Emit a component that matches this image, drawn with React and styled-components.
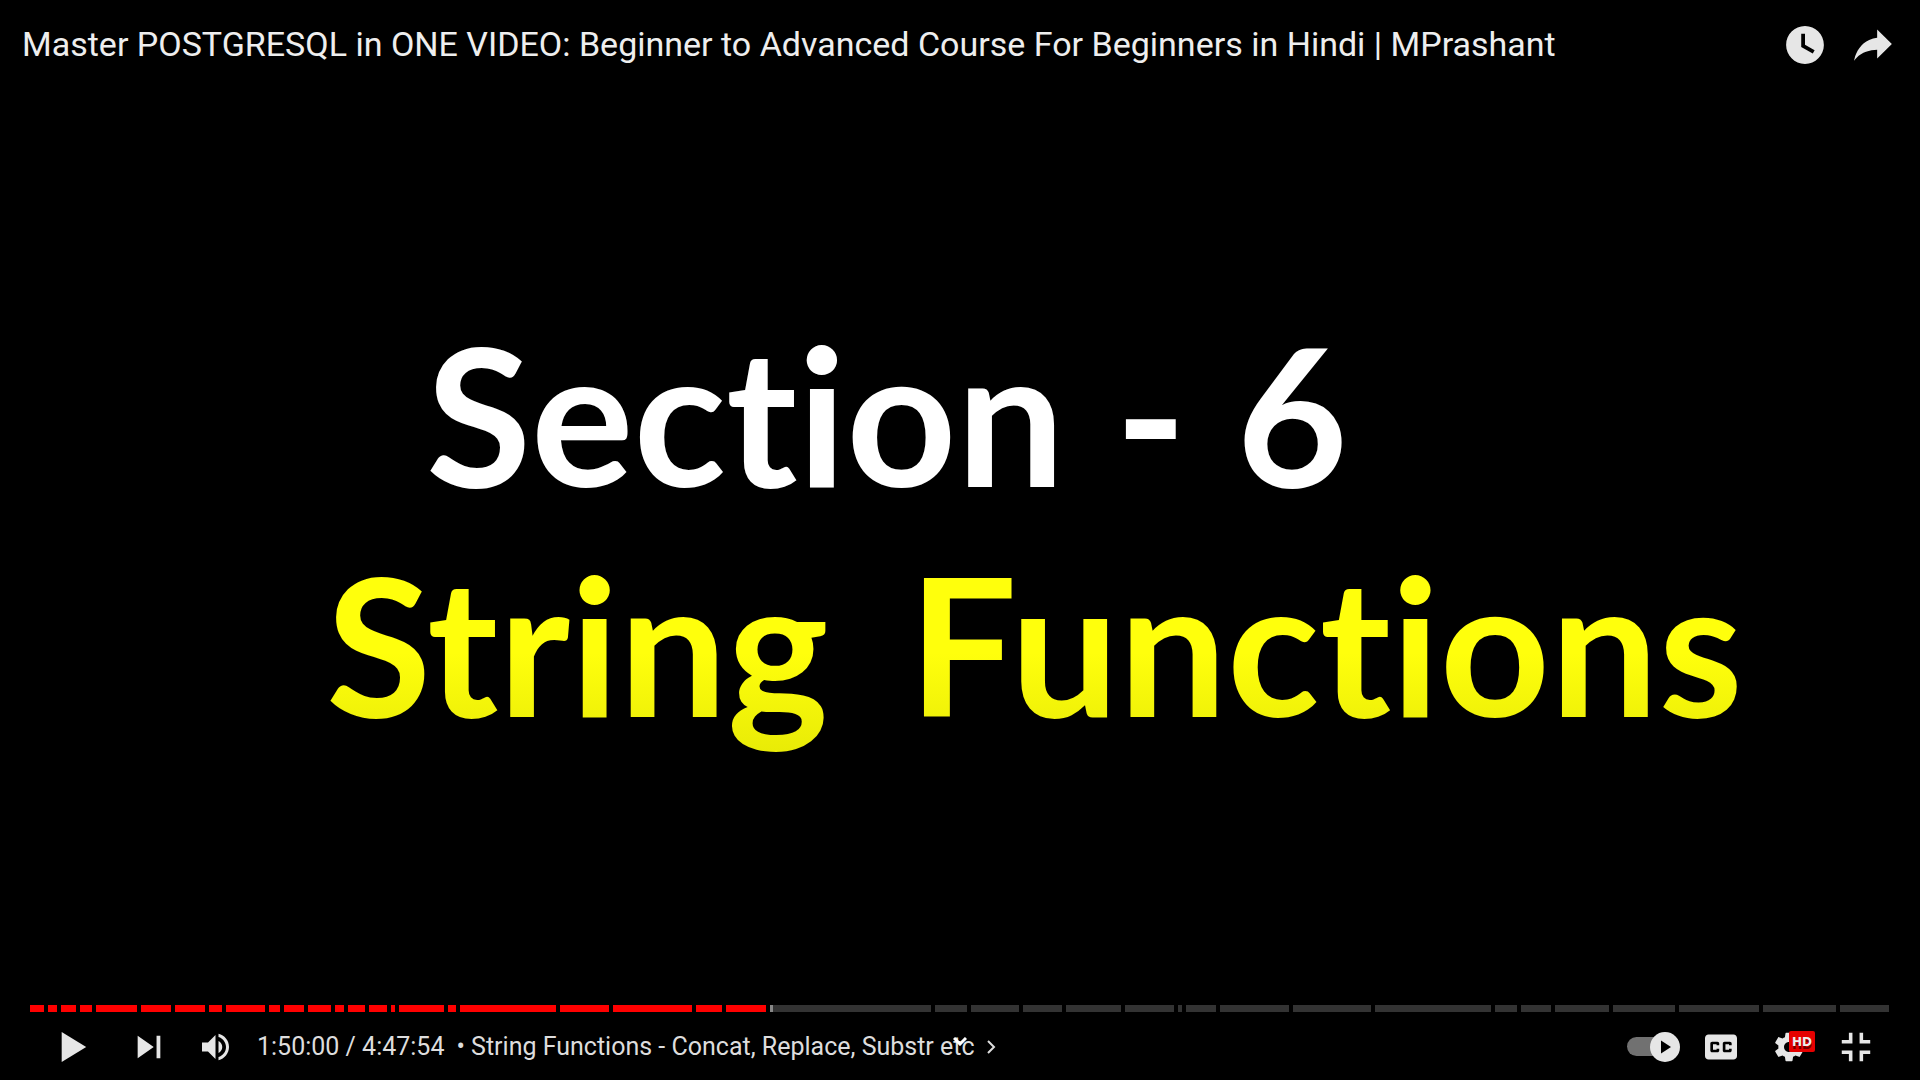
import React, { useState } from "react";
import styled, { createGlobalStyle } from "styled-components";

const GlobalStyle = createGlobalStyle`
  * { box-sizing: border-box; }
  body { margin: 0; background: #000; }
`;

const Player = styled.div`
  display: flex;
  flex-direction: column;
  min-height: 100vh;
  overflow: hidden;
  background: #000;
  color: #e6e6e6;
  font-family: Roboto, "Liberation Sans", sans-serif;
`;

const TopBar = styled.header`
  display: flex;
  align-items: center;
  justify-content: space-between;
  height: 90px;
  padding: 0 13px 0 22px;
`;

const VideoTitle = styled.a`
  padding-bottom: 2px;
  color: #eee;
  font-size: 34px;
  line-height: 40px;
  text-decoration: none;
  white-space: nowrap;
`;

const Group = styled.div`
  display: flex;
  align-items: center;
`;

const IconButton = styled.button`
  display: flex;
  align-items: center;
  justify-content: center;
  flex: none;
  width: ${(p) => p.$width || 68}px;
  height: 68px;
  padding: 0;
  border: 0;
  background: none;
  color: inherit;
  cursor: pointer;
`;

const PlayButton = styled(IconButton)`
  margin-right: 8px;
`;

const Glyph = styled.svg`
  display: block;
  flex: none;
  width: ${(p) => p.$size || 68}px;
  height: ${(p) => p.$size || 68}px;
  fill: #e6e6e6;
`;

const Slide = styled.main`
  flex: 1;
  display: flex;
  flex-direction: column;
  justify-content: center;
  padding-bottom: 20px;
  font-family: Lato, "Open Sans", sans-serif;
`;

const SlideLine = styled.h1`
  display: flex;
  gap: ${(p) => p.$gap}px;
  margin: 0;
  padding-left: ${(p) => p.$indent}px;
  color: #fff;
  font-size: 192px;
  font-weight: 700;
  font-variant-ligatures: none;
  line-height: 230px;
  white-space: nowrap;
`;

const YellowLine = styled(SlideLine).attrs({ as: "h2" })`
  padding-bottom: 20px;
  background: linear-gradient(#ffff0c 50%, #e3e605 100%);
  background-clip: text;
  -webkit-background-clip: text;
  color: transparent;
`;

const Timeline = styled.div`
  position: relative;
  display: flex;
  gap: 4px;
  height: 7px;
  margin: 0 31px 0 30px;
`;

const Seek = styled.input`
  position: absolute;
  inset: 0;
  width: 100%;
  height: 100%;
  margin: 0;
  opacity: 0;
  cursor: pointer;
`;

const Chapter = styled.div`
  flex: ${(p) => p.$span} 1 0;
  background: ${(p) =>
    p.$played ? "#f00" : p.$current ? "linear-gradient(90deg, #888 3px, #333 3px)" : "#333"};
`;

const Controls = styled.footer`
  position: relative;
  display: flex;
  align-items: center;
  justify-content: space-between;
  height: 68px;
  padding: 2px 31px 0 39px;
`;

const Status = styled.div`
  display: flex;
  align-items: center;
  gap: 12px;
  padding-left: 6px;
  color: #ddd;
  font-size: 25px;
  line-height: 30px;
  white-space: nowrap;
`;

const ChapterButton = styled.button`
  display: flex;
  align-items: center;
  gap: 12px;
  padding: 0;
  border: 0;
  background: none;
  color: inherit;
  font: inherit;
  cursor: pointer;
`;

const MoreArrow = styled.button`
  position: absolute;
  left: 50%;
  top: 25px;
  display: flex;
  padding: 0;
  border: 0;
  background: none;
  transform: translateX(-50%);
  cursor: pointer;
`;

const SettingsButton = styled(IconButton)`
  position: relative;
`;

const Badge = styled.span`
  position: absolute;
  left: 34px;
  top: 18px;
  width: 26px;
  height: 21px;
  border-radius: 2px;
  background: #e60000;
  color: #eee;
  font: 700 12px/23px "DejaVu Sans", sans-serif;
  text-align: center;
  text-shadow: 0 3px 0 #700000;
`;

const starts = [
  30, 48, 61, 80, 96, 141, 175, 209, 226, 269, 284, 308, 335, 348, 369, 391,
  399, 448, 460, 560, 613, 696, 726, 770, 935, 971, 1023, 1066, 1125, 1178,
  1186, 1220, 1293, 1375, 1495, 1521, 1555, 1613, 1679, 1763, 1840, 1893,
];
const chapters = starts.slice(0, -1).map((s, i) => starts[i + 1] - s - 4);
const current = 23;

export default function App() {
  const [time, setTime] = useState(6600);
  return (
    <>
      <GlobalStyle />
      <Player>
        <TopBar>
          <VideoTitle href="#">
            Master POSTGRESQL in ONE VIDEO: Beginner to Advanced Course For Beginners in Hindi | MPrashant
          </VideoTitle>
          <Group>
            <IconButton aria-label="Watch later">
              <Glyph viewBox="0 0 36 36">
                <path fillRule="evenodd" d="M18,8C12.47,8 8,12.47 8,18C8,23.52 12.47,28 18,28C23.52,28 28,23.52 28,18C28,12.47 23.52,8 18,8ZM16,19.02L16,12L18,12L18,17.86L23.1,20.81L22.1,22.54Z" />
              </Glyph>
            </IconButton>
            <IconButton aria-label="Share">
              <Glyph viewBox="0 0 36 36">
                <path d="m20.2,14.19 0,-4.45 7.79,7.79 -7.79,7.56 0,-4.56C16.27,20.69 12.1,21.81 9.34,24.76 8.8,25.13 7.6,27.29 8.12,25.65 9.08,21.32 11.8,17.18 15.98,15.38c1.33,-.6 2.76,-.98 4.21,-1.19z" />
              </Glyph>
            </IconButton>
          </Group>
        </TopBar>

        <Slide>
          <SlideLine $indent={426} $gap={50}>
            <span>Section</span>
            <span>-</span>
            <span>6</span>
          </SlideLine>
          <YellowLine $indent={326} $gap={80}>
            <span>String</span>
            <span>Functions</span>
          </YellowLine>
        </Slide>

        <Timeline>
          {chapters.map((span, i) => (
            <Chapter key={i} $span={span} $played={i < current} $current={i === current} />
          ))}
          <Seek
            type="range"
            aria-label="Seek"
            min="0"
            max="17274"
            value={time}
            onChange={(e) => setTime(Number(e.target.value))}
          />
        </Timeline>

        <Controls>
          <Group>
            <PlayButton aria-label="Play">
              <Glyph viewBox="0 0 36 36">
                <path d="M12,26 25,18 12,10z" />
              </Glyph>
            </PlayButton>
            <IconButton aria-label="Next">
              <Glyph viewBox="0 0 36 36">
                <path d="M12,24 20.5,18 12,12zM22,12v12h2V12z" />
              </Glyph>
            </IconButton>
            <IconButton aria-label="Mute">
              <Glyph viewBox="0 0 36 36" $size={54}>
                <path d="M8,21L12,21L17,26L17,10L12,15L8,15ZM19,14L19,22C20.48,21.32 21.5,19.77 21.5,18C21.5,16.26 20.48,14.74 19,14ZM19,11.29C21.89,12.15 24,14.83 24,18C24,21.17 21.89,23.85 19,24.71L19,26.77C23.01,25.86 26,22.28 26,18C26,13.72 23.01,10.14 19,9.23Z" />
              </Glyph>
            </IconButton>
            <Status>
              <span>1:50:00 / 4:47:54</span>
              <ChapterButton>
                <span>• String Functions - Concat, Replace, Substr etc</span>
                <svg width="9" height="14" viewBox="0 0 9 14" fill="none" stroke="#ddd" strokeWidth="2">
                  <path d="M1,1 7,7 1,13" />
                </svg>
              </ChapterButton>
            </Status>
          </Group>
          <Group>
            <IconButton role="switch" aria-checked="true" aria-label="Autoplay">
              <svg width="54" height="30" viewBox="0 0 54 30">
                <rect x="1" y="5" width="46" height="19" rx="9.5" fill="#717171" />
                <circle cx="39" cy="15" r="15" fill="#e6e6e6" />
                <path d="M35,8.5 45,15 35,21.5z" fill="#000" />
              </svg>
            </IconButton>
            <IconButton aria-label="Subtitles">
              <Glyph viewBox="0 0 36 36" $size={64}>
                <path fillRule="evenodd" d="M11,11C9.89,11 9,11.9 9,13L9,23C9,24.1 9.89,25 11,25L25,25C26.1,25 27,24.1 27,23L27,13C27,11.9 26.1,11 25,11ZM17,17L15.5,17L15.5,16.5L13.5,16.5L13.5,19.5L15.5,19.5L15.5,19L17,19L17,20C17,20.55 16.55,21 16,21L13,21C12.45,21 12,20.55 12,20L12,16C12,15.45 12.45,15 13,15L16,15C16.55,15 17,15.45 17,16ZM24,17L22.5,17L22.5,16.5L20.5,16.5L20.5,19.5L22.5,19.5L22.5,19L24,19L24,20C24,20.55 23.55,21 23,21L20,21C19.45,21 19,20.55 19,20L19,16C19,15.45 19.45,15 20,15L23,15C23.55,15 24,15.45 24,16Z" />
              </Glyph>
            </IconButton>
            <SettingsButton aria-label="Settings">
              <Glyph viewBox="0 0 36 36" $size={64}>
                <path fillRule="evenodd" d="m 23.94,18.78 c .03,-0.25 .05,-0.51 .05,-0.78 0,-0.27 -0.02,-0.52 -0.05,-0.78 l 1.68,-1.32 c .15,-0.12 .19,-0.33 .09,-0.51 l -1.6,-2.76 c -0.09,-0.17 -0.31,-0.24 -0.48,-0.17 l -1.99,.8 c -0.41,-0.32 -0.86,-0.58 -1.35,-0.78 l -0.30,-2.12 c -0.02,-0.19 -0.19,-0.33 -0.39,-0.33 l -3.2,0 c -0.2,0 -0.36,.14 -0.39,.33 l -0.30,2.12 c -0.48,.2 -0.93,.47 -1.35,.78 l -1.99,-0.8 c -0.18,-0.07 -0.39,0 -0.48,.17 l -1.6,2.76 c -0.10,.17 -0.05,.39 .09,.51 l 1.68,1.32 c -0.03,.25 -0.05,.52 -0.05,.78 0,.26 .02,.52 .05,.78 l -1.68,1.32 c -0.15,.12 -0.19,.33 -0.09,.51 l 1.6,2.76 c .09,.17 .31,.24 .48,.17 l 1.99,-0.8 c .41,.32 .86,.58 1.35,.78 l .30,2.12 c .02,.19 .19,.33 .39,.33 l 3.2,0 c .2,0 .36,-0.14 .39,-0.33 l .30,-2.12 c .48,-0.2 .93,-0.47 1.35,-0.78 l 1.99,.8 c .18,.07 .39,0 .48,-0.17 l 1.6,-2.76 c .09,-0.17 .05,-0.39 -0.09,-0.51 l -1.68,-1.32 z m -5.94,2.01 c -1.54,0 -2.8,-1.25 -2.8,-2.8 0,-1.54 1.25,-2.8 2.8,-2.8 1.54,0 2.8,1.25 2.8,2.8 0,1.54 -1.25,2.8 -2.8,2.8 z" />
              </Glyph>
              <Badge>HD</Badge>
            </SettingsButton>
            <IconButton aria-label="Exit full screen" $width={66}>
              <Glyph viewBox="0 0 36 36" $size={64}>
                <path d="m14,14-4,0 0,2 6,0 0,-6 -2,0zM22,14 22,10 20,10 20,16 26,16 26,14zM20,26 22,26 22,22 26,22 26,20 20,20zM10,22 14,22 14,26 16,26 16,20 10,20z" />
              </Glyph>
            </IconButton>
          </Group>
          <MoreArrow aria-label="More videos">
            <svg width="14" height="9" viewBox="0 0 14 9" fill="none" stroke="#fff" strokeWidth="3">
              <path d="M1,1 7,7 13,1" />
            </svg>
          </MoreArrow>
        </Controls>
      </Player>
    </>
  );
}
